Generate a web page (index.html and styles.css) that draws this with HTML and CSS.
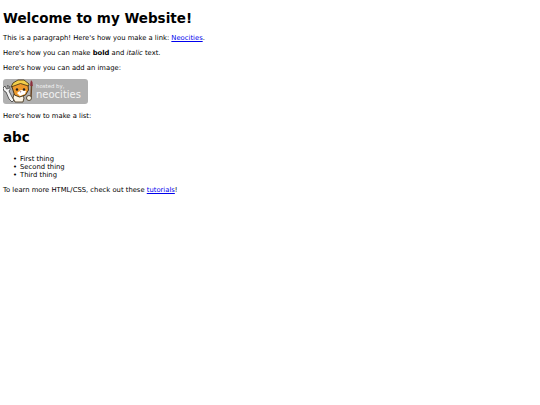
FILE: index.html
```html
<!doctype html>
<html lang="en">
  <head>
    <meta charset="UTF-8" />
    <title>The web site of abc</title>
    <link rel="stylesheet" href="styles.css">
  </head>
  <body>
    <h1>Welcome to my Website!</h1>
    <p>This is a paragraph! Here's how you make a link: <a href="#">Neocities</a>.</p>
    <p>Here's how you can make <strong>bold</strong> and <em>italic</em> text.</p>
    <p>Here's how you can add an image:</p>
    <div class="badge">
      <svg class="cat" width="31" height="25" viewBox="0 0 31 25">
        <!-- wrench -->
        <path d="M2 7l1.500 3 2-.5-1-3 2 1 .5 3-1 1.500 3 6 2 3-2 2-3-3-3-7-2-1-1-3z" fill="#f4f4f4" stroke="#3c3c3c" stroke-width=".8"/>
        <!-- body -->
        <path d="M11 15l8 0 2 4-1 4-8 0-2-4z" fill="#fdf6e6" stroke="#3a2a10" stroke-width=".8"/>
        <!-- head -->
        <path d="M9 8l1-3 5-2 6 0 4 3 .5 5-3 5-6 2-5-2z" fill="#ee9a2c" stroke="#3a2a10" stroke-width=".9"/>
        <path d="M8 8l2-4 5-3 6 0 5 4-.5 2-8-2.500z" fill="#f2cf4a" stroke="#3a2a10" stroke-width=".8"/>
        <path d="M14 14l4-3 5 1-1 3-5 2z" fill="#fff"/>
        <circle cx="14" cy="10.500" r="1.200" fill="#222"/>
        <circle cx="21" cy="10.500" r="1.200" fill="#222"/>
        <path d="M16.500 12.500l2 0-1 1z" fill="#7a2a20"/>
        <!-- brush -->
        <path d="M28.500 7l-.5 11" stroke="#6a4524" stroke-width="1.500"/>
        <path d="M28 1l1.500 2 .3 4-2.600 0 .1-3z" fill="#8c2f3c"/>
        <circle cx="26" cy="19" r="2.500" fill="#fbf4e4" stroke="#3a2a10" stroke-width=".8"/>
      </svg>
      <div class="badge-text">
        <span class="hosted">hosted by,</span>
        <span class="name">neocities</span>
      </div>
    </div>
    <p>Here's how to make a list:</p>
    <h2>abc</h2>
    <ul>
      <li>First thing</li>
      <li>Second thing</li>
      <li>Third thing</li>
    </ul>
    <p>To learn more HTML/CSS, check out these <a href="#">tutorials</a>!</p>
  </body>
</html>
```

FILE: styles.css
```css
body {
  margin: 0;
  padding: 9px 3px;
  background-color: #fff;
  color: #000;
  font-family: "DejaVu Sans", sans-serif;
  font-size: 6.8px;
  line-height: 9px;
}

h1 {
  margin: 0 0 7px;
  font-size: 13.5px;
  line-height: 18px;
}

h2 {
  margin: 8px 0 9px;
  font-size: 13.5px;
  line-height: 17px;
}

p {
  margin: 0 0 6px;
}

a {
  color: #00e;
}

ul {
  margin: 0 0 7px;
  padding-left: 10px;
  list-style: none;
}

li {
  line-height: 8px;
}

li::before {
  content: "•";
  display: inline-block;
  width: 7px;
}

.badge {
  display: flex;
  align-items: center;
  width: 85px;
  height: 25px;
  margin-bottom: 8px;
  background-color: #b0b0b0;
  border-radius: 3px;
}

.cat {
  flex: none;
}

.badge-text {
  display: flex;
  flex-direction: column;
  margin-left: 2px;
  color: #f2f2f2;
}

.hosted {
  font-size: 5.4px;
  line-height: 7px;
}

.name {
  font-size: 10px;
  line-height: 10px;
}
```
